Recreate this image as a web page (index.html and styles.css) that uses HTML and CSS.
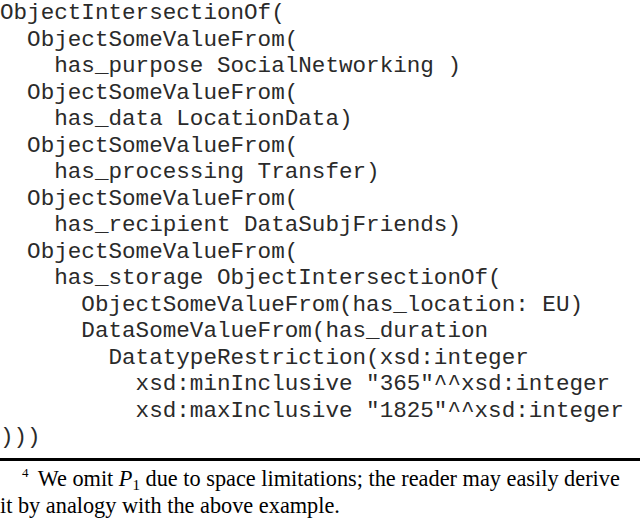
FILE: index.html
```html
<!DOCTYPE html>
<html>
<head>
<meta charset="utf-8">
<link rel="stylesheet" href="styles.css">
</head>
<body>
<pre class="code">ObjectIntersectionOf(
  ObjectSomeValueFrom(
    has_purpose SocialNetworking )
  ObjectSomeValueFrom(
    has_data LocationData)
  ObjectSomeValueFrom(
    has_processing Transfer)
  ObjectSomeValueFrom(
    has_recipient DataSubjFriends)
  ObjectSomeValueFrom(
    has_storage ObjectIntersectionOf(
      ObjectSomeValueFrom(has_location: EU)
      DataSomeValueFrom(has_duration
        DatatypeRestriction(xsd:integer
          xsd:minInclusive "365"^^xsd:integer
          xsd:maxInclusive "1825"^^xsd:integer
)))</pre>
<hr class="rule">
<p class="footnote"><sup class="fn-mark">4</sup> We omit <span class="math"><i>P</i><sub>1</sub></span> due to space limitations; the reader may easily derive it by analogy with the above example.</p>
</body>
</html>
```
FILE: styles.css
```css
html, body {
  margin: 0;
  padding: 0;
  background: #fff;
}
.code {
  margin: 0;
  padding: 0;
  font-family: "Courier New", "Nimbus Mono PS", "Nimbus Mono L", "FreeMono", Courier, "Liberation Mono", monospace;
  font-size: 22.6px;
  line-height: 26.5px;
  color: #2a2a2a;
}
.rule {
  margin: 7px 0 0 0;
  border: 0;
  height: 3px;
  background: #000;
}
.footnote {
  margin: 6px 0 0 0;
  padding-right: 10px;
  font-family: "Liberation Serif", "Times New Roman", serif;
  font-size: 22.3px;
  line-height: 24px;
  color: #000;
  text-indent: 22px;
}
.fn-mark {
  font-size: 13px;
  vertical-align: 0;
  position: relative;
  top: -9px;
  margin-right: 4px;
}
.math sub {
  font-size: 15px;
  vertical-align: 0;
  position: relative;
  top: 4px;
}
```
